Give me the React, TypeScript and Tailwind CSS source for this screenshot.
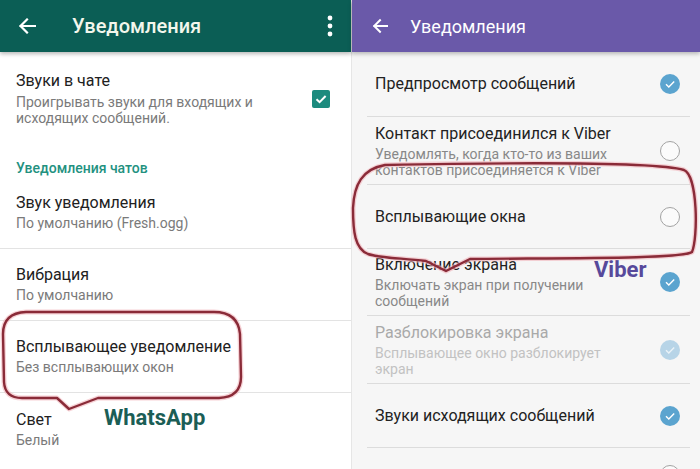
import React from 'react';

const font = { fontFamily: 'Roboto, "Noto Sans", sans-serif' };

function BackArrow({ w = 18 }: { w?: number }) {
    return (
        <svg width={w} height={16} viewBox="0 0 18 16" fill="none">
            <path d="M17 8H2.5M9 1.5 2.5 8 9 14.5" stroke="white" strokeWidth={2.2} strokeLinecap="square" />
        </svg>
    );
}

function Dots() {
    return (
        <svg width={6} height={22} viewBox="0 0 6 22">
            <circle cx={3} cy={3} r={2.4} fill="white" />
            <circle cx={3} cy={11} r={2.4} fill="white" />
            <circle cx={3} cy={19} r={2.4} fill="white" />
        </svg>
    );
}

function CheckBox() {
    return (
        <div className="w-[18px] h-[18px] rounded-[2px] bg-[#1c8b7e] flex items-center justify-center">
            <svg width={14} height={14} viewBox="0 0 14 14" fill="none">
                <path d="M2.5 7.2 5.6 10.2 11.6 4" stroke="white" strokeWidth={2} />
            </svg>
        </div>
    );
}

function Round({ state }: { state: 'on' | 'off' | 'dim' }) {
    if (state === 'off') {
        return <div className="w-[20px] h-[20px] rounded-full border-[1.5px] border-[#a3a3a3] bg-[#fbfbfb]" />;
    }
    return (
        <div className={`w-[20px] h-[20px] rounded-full flex items-center justify-center ${state === 'on' ? 'bg-[#5ba4cf]' : 'bg-[#b7d4e7]'}`}>
            <svg width={20} height={20} viewBox="0 0 20 20" fill="none">
                <path d="M6 10.3 8.8 13 14.2 7.4" stroke="white" strokeWidth={1.4} opacity={state === 'on' ? 1 : 0.7} />
            </svg>
        </div>
    );
}

function WaItem({ title, sub, last }: { title: string; sub: string; last?: boolean }) {
    return (
        <div className={`h-[72px] shrink-0 flex flex-col justify-center pl-4 ${last ? '' : 'border-b border-[#e3e3e3]'}`}>
            <div className="text-[16px] leading-[20px] text-[#212121]">{title}</div>
            <div className="text-[14px] leading-[18px] mt-[1px] text-[#7a7a7a]">{sub}</div>
        </div>
    );
}

function ViberRow({ h, title, lines, state, dim, divider = true }: { h: string; title: string; lines?: string[]; state: 'on' | 'off' | 'dim'; dim?: boolean; divider?: boolean }) {
    return (
        <>
            <div className={`${h} shrink-0 flex items-center justify-between pl-[23px] pr-[20px]`}>
                <div>
                    <div className={`text-[16px] leading-[20px] ${dim ? 'text-[#a9a9a9]' : 'text-[#222]'}`}>{title}</div>
                    {lines && (
                        <div className={`mt-[2px] text-[14px] leading-[16px] ${dim ? 'text-[#c2c2c2]' : 'text-[#888]'}`}>
                            {lines.map((l) => (
                                <div key={l}>{l}</div>
                            ))}
                        </div>
                    )}
                </div>
                <Round state={state} />
            </div>
            {divider && <div className="h-px shrink-0 bg-[#dcdcdc] ml-[15px] mr-[10px]" />}
        </>
    );
}

export default function App() {
    return (
        <div className="relative w-[700px] h-[469px] overflow-hidden flex bg-white" style={font}>
            {/* WhatsApp */}
            <div className="w-[352px] h-full flex flex-col bg-white border-r border-[#e6e6e6]">
                <div className="relative z-10 h-[52px] shrink-0 bg-[#0b5e55] flex items-center shadow-[0_2px_4px_rgba(0,0,0,0.28)]">
                    <div className="ml-[18px] flex"><BackArrow /></div>
                    <div className="ml-[36px] text-[20px] font-medium text-[#f3f7ec]">Уведомления</div>
                    <div className="ml-auto mr-[18px] flex"><Dots /></div>
                </div>
                <div className="h-[90px] shrink-0 flex items-center justify-between pl-4 pr-[21px] pt-[3px]">
                    <div>
                        <div className="text-[16px] leading-[20px] text-[#212121]">Звуки в чате</div>
                        <div className="mt-[3px] text-[14px] leading-[16px] text-[#7a7a7a]">
                            <div>Проигрывать звуки для входящих и</div>
                            <div>исходящих сообщений.</div>
                        </div>
                    </div>
                    <CheckBox />
                </div>
                <div className="h-[35px] shrink-0 pt-[18px] pl-4 text-[14px] leading-[16px] font-medium text-[#23917f]">Уведомления чатов</div>
                <WaItem title="Звук уведомления" sub="По умолчанию (Fresh.ogg)" />
                <WaItem title="Вибрация" sub="По умолчанию" />
                <WaItem title="Всплывающее уведомление" sub="Без всплывающих окон" />
                <WaItem title="Свет" sub="Белый" last />
            </div>

            {/* Viber */}
            <div className="flex-1 h-full flex flex-col bg-[#f6f6f6]">
                <div className="relative z-10 h-[52px] shrink-0 bg-[#6a59a9] flex items-center shadow-[0_2px_4px_rgba(0,0,0,0.25)]">
                    <div className="ml-[20px] flex"><BackArrow w={16} /></div>
                    <div className="ml-[22px] text-[18px] text-white">Уведомления</div>
                </div>
                <ViberRow h="h-[64px]" title="Предпросмотр сообщений" state="on" />
                <ViberRow h="h-[67px]" title="Контакт присоединился к Viber" lines={['Уведомлять, когда кто-то из ваших', 'контактов присоединяется к Viber']} state="off" />
                <ViberRow h="h-[63px]" title="Всплывающие окна" state="off" />
                <ViberRow h="h-[66px]" title="Включение экрана" lines={['Включать экран при получении', 'сообщений']} state="on" />
                <ViberRow h="h-[67px]" title="Разблокировка экрана" lines={['Всплывающее окно разблокирует', 'экран']} state="dim" dim />
                <ViberRow h="h-[63px]" title="Звуки исходящих сообщений" state="on" />
                <div className="h-[64px] shrink-0 flex items-start justify-end pt-[17px] pr-[20px]">
                    <Round state="off" />
                </div>
            </div>

            {/* annotations */}
            <div className="absolute left-[104px] top-[404px] text-[22px] leading-[28px] font-bold text-[#1b5e56]">WhatsApp</div>
            <div className="absolute left-[594px] top-[256px] text-[22px] leading-[28px] font-bold text-[#57499b]">Viber</div>
            <svg className="absolute inset-0 pointer-events-none" width={700} height={469} viewBox="0 0 700 469" fill="none">
                <g strokeLinejoin="round" strokeLinecap="round">
                    <path
                        d="M57 398 L22 398 Q5 398 4 382 L3 334 Q3 313 26 312 L214 312 Q238 312 240 334 L241 377 Q241 397 219 398 L98 398 L69 409 Z"
                        stroke="#f2b6bd" strokeWidth={5} opacity={0.6}
                    />
                    <path
                        d="M57 398 L22 398 Q5 398 4 382 L3 334 Q3 313 26 312 L214 312 Q238 312 240 334 L241 377 Q241 397 219 398 L98 398 L69 409 Z"
                        stroke="#8a2b38" strokeWidth={2.4}
                    />
                    <path
                        d="M385 165 C540 162 660 163 684 170 C698 176 698 238 692 252 C684 259 560 258 470 259 L446 271 L426 261 C400 258 380 258 368 254 C355 249 353 232 353 208 C354 185 362 169 385 165 Z"
                        stroke="#f2b6bd" strokeWidth={5} opacity={0.6}
                    />
                    <path
                        d="M385 165 C540 162 660 163 684 170 C698 176 698 238 692 252 C684 259 560 258 470 259 L446 271 L426 261 C400 258 380 258 368 254 C355 249 353 232 353 208 C354 185 362 169 385 165 Z"
                        stroke="#8a2b38" strokeWidth={2.4}
                    />
                </g>
            </svg>
        </div>
    );
}
